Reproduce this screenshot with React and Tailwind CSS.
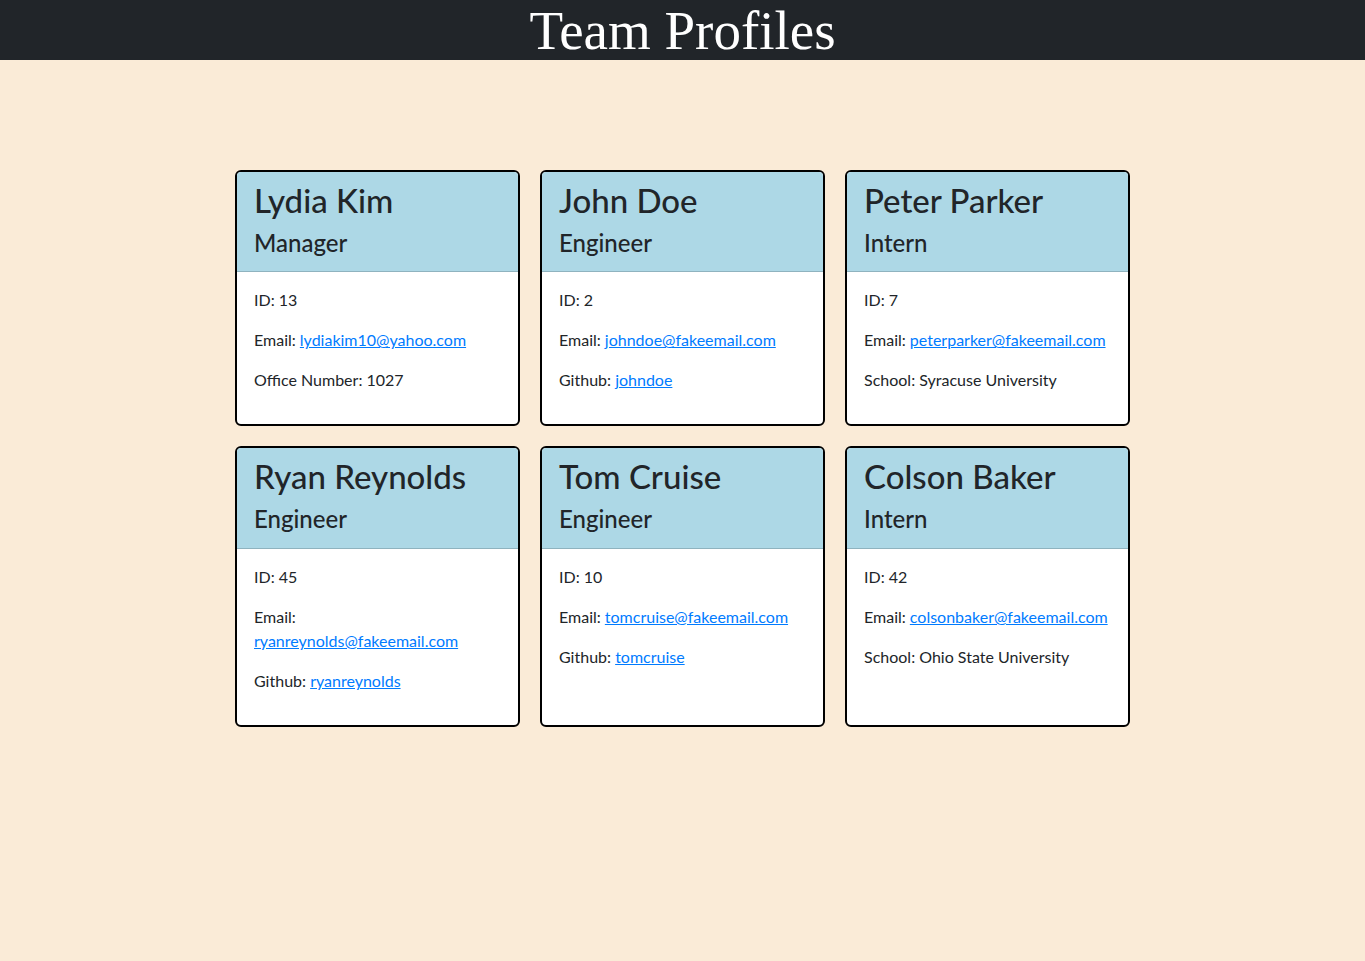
const team = [
  { name: 'Lydia Kim', role: 'Manager', id: 13, email: 'lydiakim10@yahoo.com', extra: { label: 'Office Number', value: '1027' } },
  { name: 'John Doe', role: 'Engineer', id: 2, email: 'johndoe@fakeemail.com', extra: { label: 'Github', value: 'johndoe', link: true } },
  { name: 'Peter Parker', role: 'Intern', id: 7, email: 'peterparker@fakeemail.com', extra: { label: 'School', value: 'Syracuse University' } },
  { name: 'Ryan Reynolds', role: 'Engineer', id: 45, email: 'ryanreynolds@fakeemail.com', extra: { label: 'Github', value: 'ryanreynolds', link: true } },
  { name: 'Tom Cruise', role: 'Engineer', id: 10, email: 'tomcruise@fakeemail.com', extra: { label: 'Github', value: 'tomcruise', link: true } },
  { name: 'Colson Baker', role: 'Intern', id: 42, email: 'colsonbaker@fakeemail.com', extra: { label: 'School', value: 'Ohio State University' } },
]

function ProfileCard({ member }) {
  const { extra } = member
  return (
    <div className="flex flex-col bg-white border-2 border-black rounded-[6px] overflow-hidden">
      {/* card header */}
      <div className="bg-[#add8e6] border-b border-[#8fb3bf] pl-[17px] pr-[15px] pt-[9px] pb-[14px]">
        <h2 className="text-[33px] leading-[1.2] font-medium mb-2">{member.name}</h2>
        <h4 className="text-[24px] leading-[1.2] font-medium">{member.role}</h4>
      </div>

      {/* card body */}
      <div className="flex-1 pl-[17px] pr-[18px] pt-4 pb-4 text-[16px] leading-6">
        <p className="mb-4">ID: {member.id}</p>
        <p className="mb-4">
          Email: <a href={`mailto:${member.email}`} className="text-[#007bff] underline">{member.email}</a>
        </p>
        <p className="mb-4">
          {extra.label}:{' '}
          {extra.link
            ? <a href="#" className="text-[#007bff] underline">{extra.value}</a>
            : extra.value}
        </p>
      </div>
    </div>
  )
}

export default function App() {
  return (
    <div className="min-h-[961px] bg-[#faebd7] text-[#212529] font-['Lato','Open_Sans',sans-serif]">
      <header className="h-[60px] bg-[#212529] flex items-center justify-center">
        <h1 className="text-white text-[55px] leading-none font-['Liberation_Serif',serif]">Team Profiles</h1>
      </header>

      <main className="pt-[110px] flex justify-center">
        <div className="grid grid-cols-[repeat(3,285px)] gap-5">
          {team.map(m => (
            <ProfileCard key={m.id} member={m} />
          ))}
        </div>
      </main>
    </div>
  )
}
